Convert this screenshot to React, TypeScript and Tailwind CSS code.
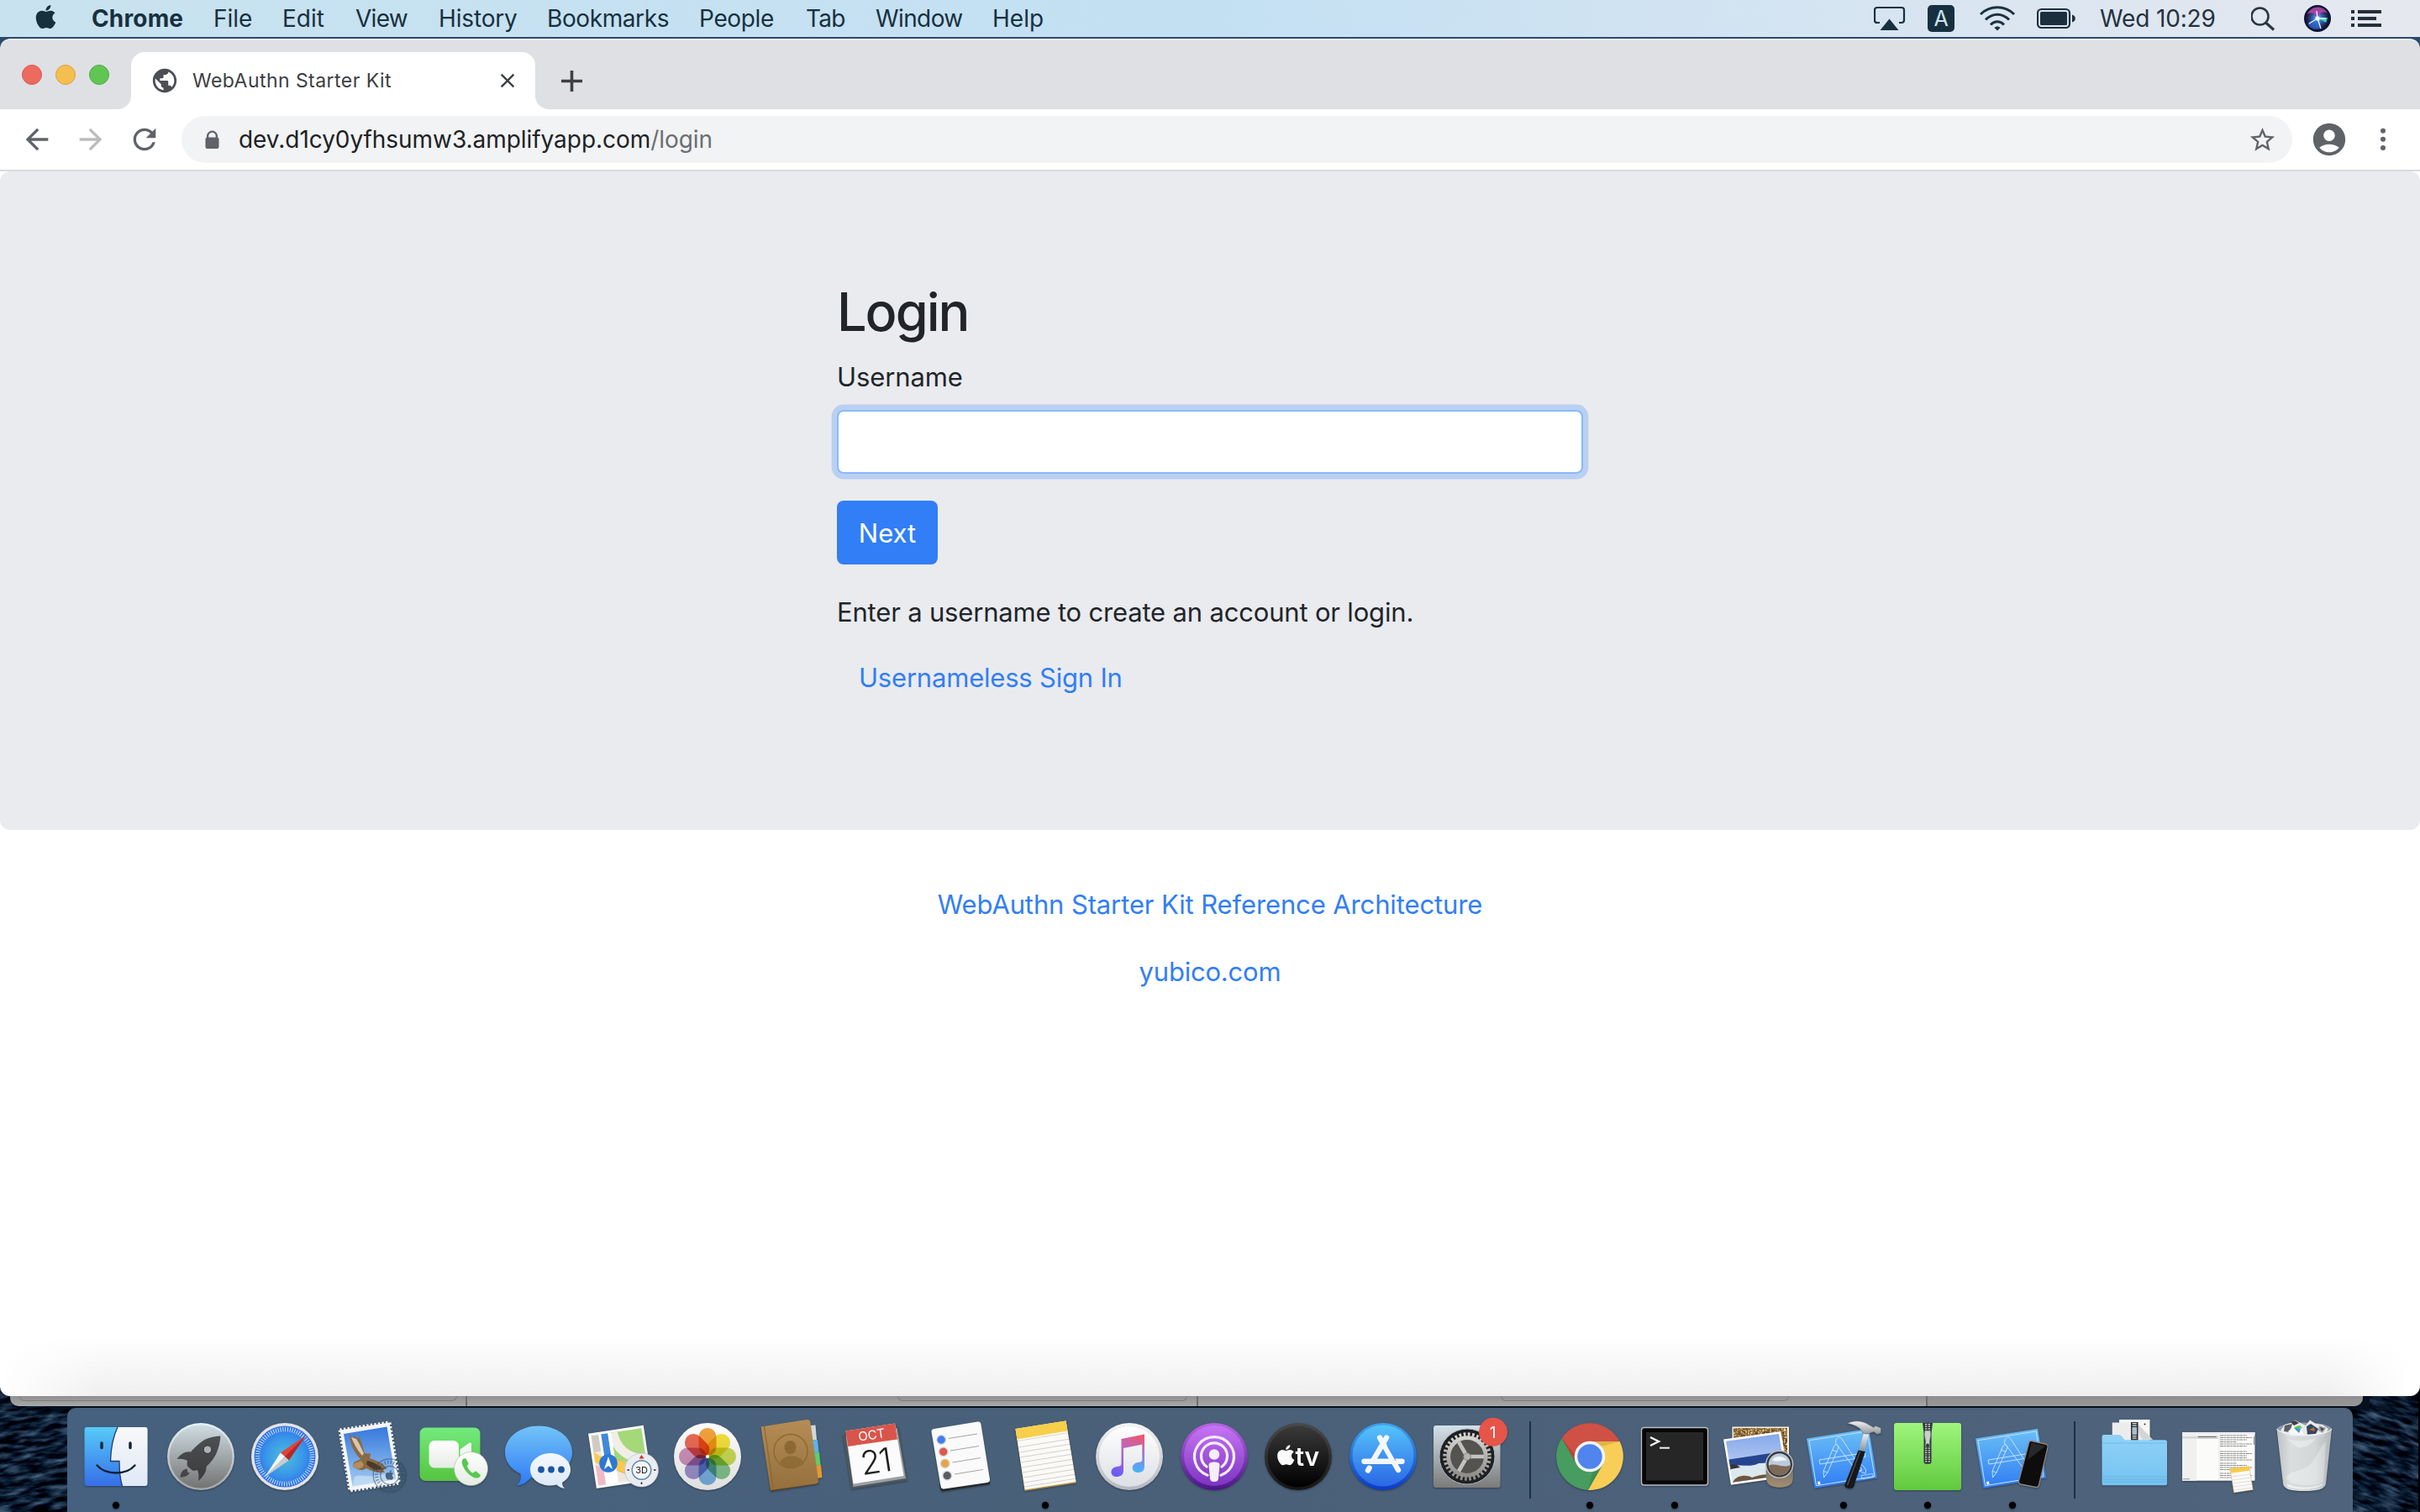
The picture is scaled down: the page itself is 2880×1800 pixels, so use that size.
import type { ReactNode } from "react";
import { FaApple } from "react-icons/fa";
import {
  MdAccountCircle,
  MdAdd,
  MdArrowBack,
  MdArrowForward,
  MdClose,
  MdLock,
  MdPublic,
  MdRefresh,
  MdStarBorder,
} from "react-icons/md";

const menus = [
  { label: "Chrome", cls: "w-[145px] font-bold tracking-[0.15px]" },
  { label: "File", cls: "w-[82px]" },
  { label: "Edit", cls: "w-[87px]" },
  { label: "View", cls: "w-[99px] tracking-[-0.7px]" },
  { label: "History", cls: "w-[129px] tracking-[-0.15px]" },
  { label: "Bookmarks", cls: "w-[181px] tracking-[-0.4px]" },
  { label: "People", cls: "w-[127px] tracking-[-0.35px]" },
  { label: "Tab", cls: "w-[83px] tracking-[-0.7px]" },
  { label: "Window", cls: "w-[139px] tracking-[-0.6px]" },
  { label: "Help", cls: "w-[80px]" },
];

function MenuBar() {
  return (
    <header className="flex h-11 shrink-0 items-center bg-linear-to-r from-[#c8e2ef] via-[#c3e0f3] via-50% to-[#e6e8ef] pl-[41px] text-[28px] leading-[44px] text-[#17303f]">
      <div className="w-[68px]">
        <FaApple className="h-8 w-[27px] -translate-y-[2px]" />
      </div>
      <nav className="flex flex-1">
        {menus.map((m) => (
          <span key={m.label} className={"whitespace-nowrap " + m.cls}>
            {m.label}
          </span>
        ))}
      </nav>
      <div className="flex h-11 w-[650px] items-center text-[#23323e]">
        <svg className="h-11 w-[64px]" viewBox="0 0 64 44">
          <path d="M7 27H4a3 3 0 0 1-3-3V12a3 3 0 0 1 3-3h29a3 3 0 0 1 3 3v12a3 3 0 0 1-3 3h-3" fill="none" stroke="#17303f" strokeWidth="2.2" />
          <path d="M18.500 22.500L29.500 36H7.500Z" fill="#17303f" />
        </svg>
        <div className="mr-[30px] flex h-8 w-8 items-center justify-center rounded-[5px] bg-[#17303f] text-[25px] text-[#cfe4f0]">A</div>
        <svg className="h-11 w-[68px]" viewBox="0 0 68 44" fill="none" stroke="#1c313f" strokeWidth="3">
          <path d="M1 17C12 6 30 6 41 17" />
          <path d="M7 23.500C15.500 15 26.500 15 35 23.500" />
          <path d="M13 29.500C18 24.500 24 24.500 29 29.500" />
          <path d="M17.500 33C19.500 31 22.500 31 24.500 33L21 36.500Z" fill="#1c313f" stroke="none" />
        </svg>
        <svg className="h-11 w-[75px]" viewBox="0 0 75 44">
          <rect x="1" y="11" width="38" height="22" rx="4.500" fill="none" stroke="#1c2f3c" strokeWidth="2.200" />
          <rect x="4" y="14" width="32" height="16" rx="1.500" fill="#1c2f3c" />
          <path d="M42 17.500C47 19 47 25 42 26.500Z" fill="#1c2f3c" />
        </svg>
        <span className="w-[180px] whitespace-nowrap tracking-[-0.15px]">Wed 10:29</span>
        <svg className="h-11 w-[63px]" viewBox="0 0 63 44" fill="none" stroke="#2a3642">
          <circle cx="10.500" cy="19.500" r="10" strokeWidth="2.600" />
          <path d="M17.500 27L27 35.500" strokeWidth="3.200" />
        </svg>
        <svg className="h-11 w-[56px]" viewBox="0 0 56 44">
          <defs>
            <radialGradient id="siri" cx="0.5" cy="0.5" r="0.5">
              <stop offset="0" stopColor="#9fe9ff" />
              <stop offset="0.35" stopColor="#3b6fc4" />
              <stop offset="0.8" stopColor="#262258" />
              <stop offset="1" stopColor="#0b1330" />
            </radialGradient>
          </defs>
          <circle cx="16" cy="22" r="16" fill="#0a1530" />
          <circle cx="16" cy="22" r="14.200" fill="url(#siri)" />
          <path d="M4 17C8 7 22 5 28 16C22 13 19 15 16 21C13 16 9 14 4 17Z" fill="#b848a8" opacity="0.85" />
          <path d="M4 28L16 21L20 34C12 36 7 34 4 28Z" fill="#2c6fd8" opacity="0.7" />
          <path d="M16 21L28 21L26 27Z" fill="#39d6b4" />
          <path d="M16 22L6 28M16 22L20 34M16 22L15 13M16 22L26 22" stroke="#e9f8ff" strokeWidth="1.300" />
          <circle cx="16" cy="22" r="2.500" fill="#ffffff" />
        </svg>
        <svg className="h-11 w-[40px]" viewBox="0 0 40 44" fill="#262f3b">
          <rect y="12" width="4" height="4" />
          <rect x="8" y="12" width="28" height="4" />
          <rect y="20" width="4" height="4" />
          <rect x="8" y="20" width="22" height="4" />
          <rect y="28" width="4" height="4" />
          <rect x="8" y="28" width="28" height="4" />
        </svg>
      </div>
    </header>
  );
}

function TabStrip() {
  return (
    <div className="flex h-[84px] items-end rounded-t-[10px] border-t-2 border-[#eeeeef] bg-[#dfe0e4]">
      <div className="flex h-full w-[140px] items-center gap-4 pl-[26px]">
        <span className="h-6 w-6 rounded-full border border-[#d9584c] bg-[#ed6a5e]" />
        <span className="h-6 w-6 rounded-full border border-[#dba03c] bg-[#f5bf4f]" />
        <span className="h-6 w-6 rounded-full border border-[#4dac40] bg-[#61c554]" />
      </div>
      <div className="h-4 w-4 bg-white">
        <div className="h-4 w-4 rounded-br-[16px] bg-[#dfe0e4]" />
      </div>
      <div className="flex h-[68px] w-[481px] items-center rounded-t-2xl bg-white">
        <MdPublic className="ml-[23px] h-[34px] w-[34px] text-[#4c4f54]" />
        <span className="ml-4 flex-1 whitespace-nowrap text-[23px] leading-[68px] tracking-[0.45px] text-[#3c4043]">
          WebAuthn Starter Kit
        </span>
        <MdClose className="mr-[19px] h-[28px] w-[28px] text-[#3c4043]" />
      </div>
      <div className="h-4 w-4 bg-white">
        <div className="h-4 w-4 rounded-bl-[16px] bg-[#dfe0e4]" />
      </div>
      <div className="flex h-[68px] items-center pl-[6px]">
        <MdAdd className="h-[43px] w-[43px] text-[#3c4043]" />
      </div>
    </div>
  );
}

function Toolbar() {
  return (
    <div className="flex h-[74px] items-center border-b-2 border-[#d9dade] bg-white">
      <div className="flex w-[216px] items-center">
        <MdArrowBack className="ml-6 h-10 w-10 text-[#5f6368]" />
        <MdArrowForward className="ml-6 h-10 w-10 text-[#babcbe]" />
        <MdRefresh className="ml-6 h-10 w-10 text-[#5f6368]" />
      </div>
      <div className="flex h-14 w-[2512px] items-center rounded-full bg-[#f1f3f4] pl-6">
        <svg className="h-[25px] w-[25px]" viewBox="0 0 25 25" fill="#5f6368">
          <path d="M6 11V8a6.500 6.500 0 0 1 13 0v3h-2.300V8a4.200 4.200 0 0 0-8.400 0v3Z" />
          <rect x="4.500" y="9.500" width="16" height="13.500" rx="2" />
        </svg>
        <span className="ml-[19px] flex-1 whitespace-nowrap text-[28px] leading-[56px] tracking-[-0.05px] text-[#202124]">
          dev.d1cy0yfhsumw3.amplifyapp.com<span className="text-[#6b6e72]">/login</span>
        </span>
        <MdStarBorder className="mr-[18px] h-[35px] w-[35px] text-[#5f6368]" />
      </div>
      <MdAccountCircle className="ml-[21px] h-[46px] w-[46px] text-[#5f6368]" />
      <svg className="ml-[33px] h-8 w-4" viewBox="0 0 16 32" fill="#5f6368">
        <circle cx="8" cy="5.700" r="3" />
        <circle cx="8" cy="15.700" r="3" />
        <circle cx="8" cy="26" r="3" />
      </svg>
    </div>
  );
}

function LoginPage() {
  return (
    <div className="relative flex h-[1458px] flex-col bg-white text-[31px] leading-[48px] text-[#212529]">
      <section className="h-[784px] rounded-[12px] bg-[#eaebef] pt-[129px]">
        <div className="mx-auto w-[888px]">
          <h2 className="h-[76px] text-[63px] leading-[76px] font-medium tracking-[-2px]">Login</h2>
          <label className="mt-4 block tracking-[-0.1px]">Username</label>
          <input className="mt-[15px] block h-[76px] w-full rounded-lg border-2 border-[#87bafb] bg-white px-6 shadow-[0_0_0_6.4px_#bad0f2] outline-none" />
          <button className="mt-8 block h-[76px] w-[120px] rounded-lg bg-[#327ef6] pt-px text-white">Next</button>
          <p className="mt-[33px] tracking-[-0.18px]">Enter a username to create an account or login.</p>
          <a className="mt-4 block px-[26px] leading-[76px] tracking-[-0.2px] text-[#327ef6]">Usernameless Sign In</a>
        </div>
      </section>
      <footer className="mt-[65px] flex flex-col items-center gap-8 tracking-[-0.12px] text-[#327ef6]">
        <a>WebAuthn Starter Kit Reference Architecture</a>
        <a className="tracking-[-0.2px]">yubico.com</a>
      </footer>
      <div className="absolute inset-x-0 bottom-0 h-18 bg-linear-to-b from-transparent to-[#efefef] [mask-image:linear-gradient(to_right,transparent,black_120px,black_2770px,transparent_2870px)]" />
    </div>
  );
}

function BackWindow() {
  return (
    <div className="ml-3 flex h-3 w-[2800px] overflow-hidden rounded-b-[10px] bg-linear-to-b from-[#8f8f8f] to-[#a9a9a9]">
      <div className="h-3 w-[544px] border-r-2 border-[#6f6f6f] pl-[11px]">
        <div className="h-[6px] w-[521px] rounded-b-[6px] border border-t-0 border-[#7e7e7e]" />
      </div>
      <div className="h-3 w-[870px] border-r-2 border-[#6f6f6f] pl-[512px]">
        <div className="h-[6px] w-[345px] rounded-b-[6px] border border-t-0 border-[#7e7e7e]" />
      </div>
      <div className="h-3 w-[868px] border-r-2 border-[#6f6f6f] pl-[360px]">
        <div className="h-[6px] w-[343px] rounded-b-[6px] border border-t-0 border-[#7e7e7e]" />
      </div>
      <div className="h-3 flex-1 bg-[#8e8e8e]/60" />
    </div>
  );
}

function DockIcon({ running, children }: { running?: boolean; children: ReactNode }) {
  return (
    <svg className="h-[124px] w-[100px] shrink-0 overflow-visible drop-shadow-[0_1px_1px_rgba(0,0,0,0.35)]" viewBox="0 0 100 124">
      {children}
      {running && <circle cx="50" cy="116" r="4.200" fill="#000000" />}
    </svg>
  );
}

function Gradient({ id, from, to }: { id: string; from: string; to: string }) {
  return (
    <linearGradient id={id} x1="0" y1="0" x2="0" y2="1">
      <stop offset="0" stopColor={from} />
      <stop offset="1" stopColor={to} />
    </linearGradient>
  );
}

function Finder() {
  return (
    <DockIcon running>
      <Gradient id="finder" from="#58cbf8" to="#356fe8" />
      <Gradient id="finderR" from="#f8f8f9" to="#dfe9f6" />
      <rect x="12.500" y="23" width="75" height="70" rx="3" fill="url(#finder)" />
      <path d="M52 23C46 35 44 48 43.500 63.500H54C54 75 55 85 57.500 93H84.500A3 3 0 0 0 87.500 90V26A3 3 0 0 0 84.500 23Z" fill="url(#finderR)" />
      <path d="M52 23C46 35 44 48 43.500 63.500H54C54 75 55 85 57.500 93" fill="none" stroke="#1d3a66" strokeWidth="1.300" />
      <path d="M33 42V47.500M67 42V47.500" stroke="#122035" strokeWidth="3.400" strokeLinecap="round" />
      <path d="M27.500 68.500C38 80.500 62 80.500 72.500 68.500" fill="none" stroke="#122035" strokeWidth="2.400" strokeLinecap="round" />
    </DockIcon>
  );
}

function Launchpad() {
  return (
    <DockIcon>
      <Gradient id="lp" from="#cfdde2" to="#737373" />
      <Gradient id="lpRing" from="#e6f2f6" to="#a5a6a6" />
      <Gradient id="rocket" from="#4d5154" to="#3a3a3b" />
      <circle cx="50" cy="58" r="40" fill="url(#lpRing)" />
      <circle cx="50" cy="58" r="37.500" fill="url(#lp)" />
      <path d="M73.500 33.500C64 34 56 36 50 41C45 45 41 49 38 52.500C32 51.500 26 55 21.500 61C27 60.500 31 61.500 34 63C33.500 65.500 33.500 67.500 34 69.500L40 74.500C42 75 44 74.500 46 74C47.500 78 48 82.500 47 87C53 82 57 76 56.500 70C62 65 66 60 69 53C71.500 47 73 40 73.500 33.500Z" fill="url(#rocket)" />
      <path d="M33.500 72.500C28 73 26 78 25.500 82.500C30.500 82.500 35.500 81 37 76.500L34.500 77.500Z" fill="#434546" />
      <circle cx="58" cy="49.700" r="4.800" fill="#a9b1b4" stroke="#2f3335" strokeWidth="1" />
    </DockIcon>
  );
}

function Safari() {
  return (
    <DockIcon>
      <radialGradient id="saf">
        <stop offset="0" stopColor="#4cc0d8" />
        <stop offset="0.6" stopColor="#3a97ea" />
        <stop offset="1" stopColor="#2f6fe6" />
      </radialGradient>
      <circle cx="50" cy="58" r="40" fill="#e3e3e4" />
      <circle cx="50" cy="58" r="36.500" fill="url(#saf)" />
      <circle cx="50" cy="58" r="32.500" fill="none" stroke="#d6ecfc" strokeWidth="5.500" strokeDasharray="0.9 1.936" />
      <path d="M75 33L44.800 53.500L54.800 62.500Z" fill="#e0433a" />
      <path d="M75 33L50 58L54.800 62.500Z" fill="#b52a26" />
      <path d="M26 82.500L44.800 53.500L50 58Z" fill="#f6f6f6" />
      <path d="M26 82.500L50 58L54.800 62.500Z" fill="#c9cbcd" />
    </DockIcon>
  );
}

function Mail() {
  return (
    <DockIcon>
      <Gradient id="sky" from="#3578dc" to="#a5cdf2" />
      <path d="M14.500 26.500L73.500 17.500L85 89.500L26.500 98.500Z" fill="#f4f5f7" stroke="#f4f5f7" strokeWidth="4" strokeDasharray="2.400 2.200" />
      <path d="M19 31L70.500 22.500L81 85L29.500 93.500Z" fill="url(#sky)" />
      <path d="M32 82C42 78 50 84 60 80L78 78L80.500 85L29.500 93.500Z" fill="#d5e6f5" opacity="0.6" />
      <path d="M26 31L31 37L31 31L35 37L37 34C41 42 42 49 44 54L51 54.500L50 60C58 62 65 66 71 72L66 74L68 77L60 77C54 76 50 74 46 72C42 75 37 75 30 70L31 65L39 61C34 56 29 48 27 40Z" fill="#8a6a45" />
      <path d="M28 35C31 42 35 50 41 57L43 54C40 48 37 41 34 37Z" fill="#d8c8ae" />
      <path d="M47 63C54 64 60 68 66 73L58 74C53 73 49 70 46 67Z" fill="#4c3a28" />
      <path d="M30 70L32 66L40 63L43 68C40 73 35 74 30 70Z" fill="#b58e5a" />
      <g fill="none" stroke="#2f4762" opacity="0.55">
        <circle cx="73.700" cy="80.300" r="19.500" strokeWidth="1.300" />
        <circle cx="73.700" cy="80.300" r="15.500" strokeWidth="4" strokeDasharray="1.300 2.200" />
        <circle cx="73.700" cy="80.300" r="11" strokeWidth="1.200" />
      </g>
      <FaApple x="67" y="73.500" size="13" color="#2f4762" opacity="0.8" />
    </DockIcon>
  );
}

function FaceTime() {
  return (
    <DockIcon>
      <Gradient id="ft" from="#72ea7d" to="#55c53f" />
      <Gradient id="ftw" from="#ffffff" to="#e6ebe3" />
      <rect x="9.500" y="23.500" width="72" height="63.500" rx="7" fill="url(#ft)" />
      <rect x="20.500" y="39" width="35.500" height="32.500" rx="6.500" fill="url(#ftw)" />
      <path d="M57.500 49.500L68 42C69.500 41 71 41.500 71 43.500V68L57.500 60Z" fill="#f2f6f1" />
      <circle cx="70.500" cy="72.500" r="20" fill="url(#ftw)" stroke="#a6b8a0" strokeWidth="0.600" />
      <path d="M60.500 61.500C59 64 59.500 68 63.500 74C68 80.500 74 84 78.500 83.500C80.500 83 82 81.500 82 80L76.500 75.500C75 75 74 77.500 72.500 77.500C70 76.500 67 72.500 66 69.500C66 68 68 67.500 67.500 66L64.500 60.500C63 60 61.500 60.500 60.500 61.500Z" fill="#58c950" />
    </DockIcon>
  );
}

function Messages() {
  return (
    <DockIcon>
      <Gradient id="msg" from="#72c4f8" to="#2f7af5" />
      <Gradient id="msgw" from="#f4f8fc" to="#dbe8f6" />
      <path d="M50 21.500C72 21.500 90 35 90 53C90 71 72 84 50 84C46.500 84 44 83.700 41 83C36 88.500 31 92 24 92.500C28.500 88 29.500 84 28.500 78.500C17 73 10 64 10 53C10 35 28 21.500 50 21.500Z" fill="url(#msg)" />
      <path d="M64 54C77 54 88 62.500 88 73.500C88 80 84 85.500 78 89C78 92 79 94 81 96C77 95.500 74 94 71.500 91.500C69 92.200 66.500 92.500 64 92.500C51 92.500 40 84.500 40 73.500C40 62.500 51 54 64 54Z" fill="url(#msgw)" />
      <g fill="#1c56a3">
        <circle cx="53" cy="73.500" r="3.900" />
        <circle cx="65" cy="73.500" r="3.900" />
        <circle cx="77" cy="73.500" r="3.900" />
      </g>
    </DockIcon>
  );
}

function Maps() {
  return (
    <DockIcon>
      <g transform="translate(9 30.700) rotate(-8.600)">
        <rect width="66.500" height="66" fill="#fbfbfa" />
        <svg x="3" y="3" width="60.500" height="60" viewBox="3 3 60.500 60">
          <rect width="66" height="66" fill="#ece8e1" />
          <rect x="3" y="3" width="9" height="20" fill="#cfcbc4" />
          <path d="M26 0H66V52L26 34Z" fill="#a5d878" />
          <path d="M29 0C29 22 42 38 66 40" fill="none" stroke="#f1eee8" strokeWidth="11" />
          <path d="M0 20L12 30V42L0 33Z" fill="#f8cb50" />
          <path d="M24 32L66 58V72L24 46Z" fill="#f8cb50" stroke="#e5a93c" strokeWidth="0.800" />
          <path d="M0 36L12 44V66H0Z" fill="#f1b9c6" />
          <rect x="12" y="0" width="15" height="66" fill="#ffffff" />
          <rect x="15" y="0" width="8" height="36" fill="#4189d8" />
        </svg>
      </g>
      <circle cx="33" cy="66" r="10.800" fill="#2c78d6" />
      <path d="M33 58L38 73L33 69L28 73Z" fill="#ffffff" />
      <circle cx="72.500" cy="74" r="20" fill="#e9edf2" stroke="#b9c2cc" strokeWidth="0.700" />
      <circle cx="72.500" cy="74" r="11.300" fill="#f3f5f8" stroke="#5b89a8" strokeWidth="1.400" />
      <path d="M72.500 56L75.500 60.500H69.500Z" fill="#d92f26" />
      <path d="M55.500 74H58M87 74H89.500M72.500 88.500V91" stroke="#222222" strokeWidth="1.600" />
      <text x="72.500" y="78" fontSize="11" textAnchor="middle" fill="#222222">3D</text>
    </DockIcon>
  );
}

const petals = [
  { turn: "rotate(0)", color: "#f4a43b" },
  { turn: "rotate(45)", color: "#f5e13c" },
  { turn: "rotate(90)", color: "#cbdc55" },
  { turn: "rotate(135)", color: "#86c68f" },
  { turn: "rotate(180)", color: "#7cb4e6" },
  { turn: "rotate(225)", color: "#9f93cd" },
  { turn: "rotate(270)", color: "#cf92bb" },
  { turn: "rotate(315)", color: "#ec6a57" },
];

function Photos() {
  return (
    <DockIcon>
      <Gradient id="ph" from="#fdfdfd" to="#dedede" />
      <circle cx="50" cy="58" r="40" fill="url(#ph)" />
      <g transform="translate(50 58)">
        {petals.map((p) => (
          <rect key={p.color} className="mix-blend-multiply" x="-10.500" y="-34" width="21" height="33" rx="10.500" fill={p.color} transform={p.turn} />
        ))}
        <circle r="2" fill="#ffffff" />
      </g>
    </DockIcon>
  );
}

function Contacts() {
  return (
    <DockIcon>
      <Gradient id="ct" from="#b58c55" to="#94703c" />
      <path d="M72 21L78.500 20.500L80 38L74 39Z" fill="#d3d6d9" />
      <path d="M74 38.500L81 38L82.500 53L76 54Z" fill="#5cb5e8" />
      <path d="M76 53.500L83 53L84.500 68L78 69Z" fill="#5fcf68" />
      <path d="M78 68.500L85 68L86.500 83L80 84Z" fill="#e59a30" />
      <path d="M25 99.500L82 90.500L81 87L24 95Z" fill="#5b421f" />
      <path d="M13.500 22.500L68 14C70.500 13.700 72 15 72.500 17L82 87C82.200 89 81 90 79 90.500L25 98Z" fill="url(#ct)" />
      <path d="M17.500 22L28.500 97.500" stroke="#8b6734" strokeWidth="1.200" />
      <circle cx="49" cy="51.500" r="20" fill="none" stroke="#8c6833" strokeWidth="1.400" />
      <ellipse cx="48.500" cy="47" rx="7" ry="8" fill="#8c6833" />
      <path d="M36 65C39 59 45 57.500 50 57.500C56 57.500 61 60 63.500 64C56 73 43 73.500 36 65Z" fill="#8c6833" opacity="0.850" />
    </DockIcon>
  );
}

function Calendar() {
  return (
    <DockIcon>
      <path d="M10 32.500L76 22.500L87 86.500L20 97Z" fill="#4e565d" />
      <path d="M14 36L74.500 24L85 84L22.500 94Z" fill="#9aa0a4" />
      <path d="M13.500 27.500L72 18.500L82.500 81L22.500 90.500Z" fill="#fbfbfb" />
      <path d="M13.500 27.500L72 18.500L75 37.500L16.200 46Z" fill="#d9554b" />
      <text x="44.300" y="37.500" fontSize="15" textAnchor="middle" fill="#ffffff" transform="rotate(-8.700 44.300 32.300)">OCT</text>
      <text x="48.500" y="77.500" fontSize="39" fontWeight="300" letterSpacing="-2" textAnchor="middle" fill="#1f1f1f" transform="rotate(-8.700 49.600 63)">21</text>
    </DockIcon>
  );
}

function Reminders() {
  return (
    <DockIcon>
      <path d="M28 98.500L84 90L83 84L26 92Z" fill="#24282c" stroke="#24282c" strokeWidth="2" strokeLinejoin="round" />
      <path d="M19 28.500L71 20L81.500 85.500L30 93Z" fill="#fafafa" stroke="#fafafa" strokeWidth="7" strokeLinejoin="round" />
      <path d="M35.500 36.500L70 31M38 51L72 45.500M40.500 65L74 59.500M43 79L76.500 73.500" stroke="#9b9b9b" strokeWidth="0.900" />
      <g stroke="#d5d5d5" strokeWidth="1.300">
        <circle cx="27.200" cy="38" r="5.300" fill="#3f7df0" />
        <circle cx="29.700" cy="52.300" r="5.300" fill="#e0574b" />
        <circle cx="31.700" cy="66.300" r="5.300" fill="#eaa344" />
        <circle cx="34.200" cy="80.700" r="5.300" fill="#555c66" />
      </g>
    </DockIcon>
  );
}

function Notes() {
  return (
    <DockIcon running>
      <path d="M14.500 25L74.500 15.500L86.800 89.500L25.600 99Z" fill="#b98f35" />
      <path d="M14.500 25L74.500 15.500L86.500 88L25.600 97.500Z" fill="#fbfaf7" />
      <path d="M14.500 25L74.500 15.500L76.500 27.500L16.500 37.500Z" fill="#f8cf4a" />
      <path d="M17 39.500L76.500 29.800" stroke="#a9a9a9" strokeWidth="0.900" strokeDasharray="1.200 1.200" />
      <path d="M18 47L78 37.300M19 53L79 43.300M20 59L80 49.300M21 65L81 55.300M22 71L82 61.300M23 77L83 67.300M24 83L84 73.300M25 89L85 79.300M25.500 94L86 84.300" stroke="#c5c5c5" strokeWidth="0.800" />
    </DockIcon>
  );
}

function Music() {
  return (
    <DockIcon>
      <Gradient id="mu" from="#ffffff" to="#dcdfe5" />
      <Gradient id="muRing" from="#f4f4f5" to="#b4b7bc" />
      <linearGradient id="note" gradientUnits="userSpaceOnUse" x1="66" y1="32" x2="40" y2="82">
        <stop offset="0" stopColor="#f0566a" />
        <stop offset="0.450" stopColor="#b768c8" />
        <stop offset="1" stopColor="#6b5cf5" />
      </linearGradient>
      <linearGradient id="noteR" gradientUnits="userSpaceOnUse" x1="66" y1="34" x2="62" y2="76">
        <stop offset="0" stopColor="#f25765" />
        <stop offset="0.500" stopColor="#9a7ad8" />
        <stop offset="1" stopColor="#45b4f7" />
      </linearGradient>
      <circle cx="50" cy="58" r="40" fill="url(#muRing)" />
      <circle cx="50" cy="58" r="36" fill="url(#mu)" />
      <path d="M40.500 37L68 31.500V43L43 48V75C43 80 39 82 35 82C31 82 28.500 80 28.500 76.500C28.500 73 31 70.500 35.500 70C39 69.500 40.500 69 40.500 66Z" fill="url(#note)" />
      <path d="M65.300 40L68 31.500V70C68 75 64.500 77 60.500 77C56.500 77 53.800 75 53.800 71.500C53.800 68 56.500 65.500 60.500 65C64 64.500 65.300 64 65.300 61.500Z" fill="url(#noteR)" />
    </DockIcon>
  );
}

function Podcasts() {
  return (
    <DockIcon>
      <Gradient id="pod" from="#c774f5" to="#7c34c0" />
      <Gradient id="podRing" from="#b766e2" to="#4a1688" />
      <circle cx="50" cy="58" r="40" fill="url(#podRing)" />
      <circle cx="50" cy="57" r="36" fill="url(#pod)" />
      <g fill="none" stroke="#f6effa" strokeWidth="3.200" strokeLinecap="round">
        <path d="M42 80.200A23.500 23.500 0 1 1 58 80.200" />
        <path d="M41 70A15.500 15.500 0 1 1 59 70" />
      </g>
      <circle cx="50" cy="55.500" r="6.200" fill="#f6effa" />
      <path d="M43.500 68C43.500 65.500 46 64.500 50 64.500C54 64.500 56.500 65.500 56.500 68L55 84C54.700 87 53 88 50 88C47 88 45.300 87 45 84Z" fill="#f6effa" />
    </DockIcon>
  );
}

function AppleTv() {
  return (
    <DockIcon>
      <Gradient id="tv" from="#3a3a3a" to="#000000" />
      <Gradient id="tvRing" from="#4a4a4a" to="#151515" />
      <circle cx="50" cy="58" r="40" fill="url(#tvRing)" />
      <circle cx="50" cy="58" r="36.500" fill="url(#tv)" />
      <FaApple x="21.500" y="42.500" size="27.500" color="#fafafa" />
      <text x="46.500" y="68.500" fontSize="30" fontWeight="600" letterSpacing="-0.200" fill="#fafafa">tv</text>
    </DockIcon>
  );
}

function AppStore() {
  return (
    <DockIcon>
      <Gradient id="as" from="#56c3fa" to="#2a67e6" />
      <Gradient id="asRing" from="#3fa4ee" to="#0b3bc4" />
      <circle cx="50" cy="58" r="40" fill="url(#asRing)" />
      <circle cx="50" cy="57" r="36.500" fill="url(#as)" />
      <g fill="none" stroke="#f3f7fc" strokeWidth="6.400" strokeLinecap="round">
        <path d="M54 35.500L37.500 63.500M33.600 71.500L32 74.500" />
        <path d="M27.500 63.700H72.500" />
        <path d="M46 35.500L68 74" />
      </g>
      <path d="M55 45L65 63" stroke="#2f7fe8" strokeWidth="0.800" />
    </DockIcon>
  );
}

function SystemPreferences() {
  return (
    <DockIcon>
      <Gradient id="sp" from="#d3e1ea" to="#7b7b79" />
      <Gradient id="gear" from="#d4d4d2" to="#8f8e8a" />
      <rect x="10" y="21" width="79.500" height="74" rx="3" fill="url(#sp)" />
      <circle cx="50" cy="58" r="33" fill="#1f2021" />
      <circle cx="50" cy="58" r="33" fill="none" stroke="#a7bdd0" strokeWidth="0.900" />
      <circle cx="50" cy="58" r="26.500" fill="none" stroke="url(#gear)" strokeWidth="4.500" strokeDasharray="2.700 2.504" />
      <circle cx="50" cy="58" r="22.300" fill="#55534f" stroke="url(#gear)" strokeWidth="4.800" />
      <g stroke="#c3c2bf" strokeWidth="4.600">
        <path d="M50 58H70M50 58L40 40.700M50 58L40 75.300" />
      </g>
      <circle cx="50" cy="58" r="4.300" fill="#b5b4b1" stroke="#7b7a77" strokeWidth="0.800" />
      <circle cx="81" cy="28.700" r="17" fill="#e6544a" />
      <text x="80.500" y="35.500" fontSize="19" textAnchor="middle" fill="#ffffff">1</text>
    </DockIcon>
  );
}

function Chrome() {
  return (
    <DockIcon running>
      <path d="M16.600 36.100A40 40 0 0 1 85.600 40L50 40L34.400 67Z" fill="#cf5145" />
      <path d="M85.600 40A40 40 0 0 1 47.700 97.900L65.600 67L50 40Z" fill="#f8ce56" />
      <path d="M47.700 97.900A40 40 0 0 1 16.600 36.100L34.400 67L65.600 67Z" fill="#479c60" />
      <path d="M50 40H85.600L64 46Z" fill="#c99a35" opacity="0.500" />
      <path d="M16.600 36.100L34.400 67L33 56Z" fill="#9c3128" opacity="0.400" />
      <path d="M65.600 67L47.700 97.900L54 74Z" fill="#2c7a42" opacity="0.400" />
      <circle cx="50" cy="58" r="18.300" fill="#f4f4f4" />
      <circle cx="50" cy="58" r="14.700" fill="#4f85ec" />
    </DockIcon>
  );
}

function Terminal() {
  return (
    <DockIcon running>
      <rect x="10.500" y="23.500" width="79" height="68.500" rx="3" fill="#060606" stroke="#b9bdc0" strokeWidth="1.400" />
      <rect x="16" y="29" width="68" height="57.500" fill="#262626" />
      <path d="M21 35L31 40L21 45" fill="none" stroke="#f3f3f3" strokeWidth="2.400" />
      <path d="M32 47.700H44" stroke="#f3f3f3" strokeWidth="2" />
    </DockIcon>
  );
}

function Preview() {
  return (
    <DockIcon>
      <Gradient id="pvSky" from="#86a8ea" to="#cddcf5" />
      <Gradient id="barrel" from="#6f6a64" to="#a58f74" />
      <filter id="sand" x="0" y="0" width="1" height="1" colorInterpolationFilters="sRGB">
        <feTurbulence baseFrequency="0.35" numOctaves="2" seed="4" />
        <feColorMatrix values="1.2 0 0 0 0.3  1.1 0 0 0 0.2  0.8 0 0 0 0.08  0 0 0 0 1" />
      </filter>
      <rect x="18.500" y="22.500" width="67.500" height="60" fill="#f4f1ea" />
      <rect x="20.500" y="24.500" width="63.500" height="56" filter="url(#sand)" />
      <path d="M8 37.500L76.300 28L85.500 82L17 91.700Z" fill="#fdfdfd" />
      <path d="M11 39.700L74 31L82 80L19 88.700Z" fill="url(#pvSky)" />
      <path d="M14.500 61.500L77.500 52L80 69L16.500 74Z" fill="#27458f" />
      <path d="M16 70C30 66 38 72 50 66C60 66 70 62 79.500 64L82 80L19 88.700Z" fill="#dbe9ee" />
      <path d="M16.500 73L28 71L24 68L16 67.500Z" fill="#3b3029" />
      <path d="M20 87C24 80 36 79 42 83C50 80 60 78 66 80L81 80L19 88.700Z" fill="#6e5640" />
      <path d="M58.700 67.500C58.700 80 58 88 62 91C68 96 82 96 88 91C92 88 90.700 80 90.700 67.500Z" fill="url(#barrel)" />
      <circle cx="74.700" cy="67.300" r="16" fill="#35383b" stroke="#b9bcbe" strokeWidth="1.500" />
      <circle cx="74.700" cy="67.300" r="13" fill="#bccbdc" />
      <path d="M62 69C68 64 80 73 87.500 68C87 76 81 80 74.700 80.300C68 80 63 76 62 69Z" fill="#7d6a55" />
      <path d="M66 62C70 56 80 57 84 63C78 61 72 66 66 62Z" fill="#f3f7fa" />
    </DockIcon>
  );
}

function Blueprint({ id }: { id: string }) {
  return (
    <>
      <Gradient id={id} from="#6cc0f6" to="#2f7cf3" />
      <path d="M6 36.500L80 25L90 83.500L15.500 95.700Z" fill={"url(#" + id + ")"} />
      <g fill="none" stroke="#c3e2fb" strokeWidth="1">
        <path d="M9 38.700L78 28L87 81.500L17.500 92.700Z" />
        <path d="M21 62L75 53.500L76 58.500L22 67Z" />
        <path d="M41 38C43 34 46 34 48 37L72 74L66 76L40.500 42Z" />
        <path d="M38.500 46C40 42.500 44 43.500 44 47L31 77L26.500 83L26 75.500Z" />
        <path d="M36.500 50L42.500 52.500M26 75.500L31 77" />
        <path d="M68 66C75 69 78 74 76 78C71 77 68 74 67 71" />
      </g>
      <path d="M19 88L22 87.500L22.500 91L19.500 91.500Z" fill="#ffffff" />
    </>
  );
}

function Xcode() {
  return (
    <DockIcon running>
      <Blueprint id="bpX" />
      <path d="M71 80.500L84.500 78.500L85.300 82.500L71.700 84.700Z" fill="none" stroke="#c3e2fb" strokeWidth="0.800" />
      <Gradient id="steel" from="#f2f3f4" to="#8e959b" />
      <path d="M68.500 50L74 30H80L75.500 51Z" fill="url(#steel)" />
      <path d="M54.500 18.500C62 14.500 72 15 80 20L86 23.500L88 21.500L94.500 24V30L90 31.500L86 28.500L80.500 30.500C79 31.500 74 31 73 30C71 24 64 20.500 54.500 18.500Z" fill="url(#steel)" stroke="#5d646a" strokeWidth="0.600" />
      <path d="M67.500 50.500L75.800 52L62 94C60 97.500 52 96 51 92.500Z" fill="#17181a" />
      <path d="M69.500 52L54.500 92" stroke="#55595e" strokeWidth="1.200" />
    </DockIcon>
  );
}

function ArchiveUtility() {
  return (
    <DockIcon running>
      <Gradient id="ar" from="#9ff57c" to="#60ca3e" />
      <rect x="10" y="18" width="80" height="80" rx="3" fill="url(#ar)" />
      <path d="M44 18H56L54.500 30V64C54.500 66 53.500 66.700 52 66.700H48C46.500 66.700 45.500 66 45.500 64V30Z" fill="#33373a" />
      <path d="M50 19V65" stroke="#d9dcde" strokeWidth="6" strokeDasharray="1.200 1.400" />
      <path d="M50 18V65" stroke="#33373a" strokeWidth="1.400" />
      <path d="M46.500 27H53.500L54 32L52.500 40L53 46H47L47.500 40L46 32Z" fill="#c9ced2" stroke="#4b5054" strokeWidth="0.700" />
      <circle cx="50" cy="44.500" r="2" fill="#33373a" />
    </DockIcon>
  );
}

function Simulator() {
  return (
    <DockIcon running>
      <Blueprint id="bpS" />
      <path d="M73 39.500L89 43C91.500 43.500 92.500 45 92 47L81.500 92C81 94 79.500 95 77.500 94.500L60 91C57.800 90.500 57 89 57.500 87L69.500 42C70 40 71 39 73 39.500Z" fill="#0d0d0e" stroke="#8d8783" strokeWidth="1.300" />
      <path d="M72.500 41.500L89.500 45.500L68 62Z" fill="#26282a" />
    </DockIcon>
  );
}

function Downloads() {
  return (
    <DockIcon>
      <Gradient id="fo" from="#8fd2f7" to="#74c3f1" />
      <rect x="30" y="14" width="36.500" height="30" fill="#f6f6f6" />
      <path d="M21.700 17.500H44L70 38H21.700Z" fill="#ececec" />
      <path d="M51 18L70 38H58C54 33 52 26 51 18Z" fill="#d4d5d7" />
      <rect x="44" y="17" width="8.500" height="22" fill="#2c2f32" />
      <path d="M48.200 18V38" stroke="#e6e8ea" strokeWidth="5" strokeDasharray="1.200 1.300" />
      <rect x="45.500" y="23" width="5.500" height="9" rx="1.500" fill="#a9bcc8" />
      <circle cx="60.500" cy="19.500" r="0.900" fill="#222222" />
      <path d="M9.500 34.500C9.500 33 10.500 32 12 32H29C31 32 32.500 33 34 35L36 37.500C36.500 38 37 38.300 38 38.300H84.500C86 38.300 87 39.300 87 41V90C87 91.500 86 92.300 84.500 92.300H12C10.500 92.300 9.500 91.500 9.500 90Z" fill="url(#fo)" />
      <path d="M9.500 42H87" stroke="#6cbbe9" strokeWidth="0.900" />
      <path d="M9.500 82H87M9.500 85H87M9.500 88H87" stroke="#66b1dc" strokeWidth="0.800" />
    </DockIcon>
  );
}

const textRows = [31, 33.500, 36, 38.500, 41, 43.500, 50, 52.500, 55, 57.500, 60, 64, 66.500, 69, 71.500, 76, 78.500, 81];

function MinimizedNotes() {
  return (
    <DockIcon>
      <rect x="5" y="29" width="86.500" height="57.700" fill="#fbfbf9" />
      <rect x="5" y="29" width="86.500" height="3" fill="#eeeeee" />
      <rect x="5" y="32" width="17" height="54.700" fill="#f0f0f0" />
      <rect x="5" y="34" width="17" height="2.500" fill="#d5d5d5" />
      <rect x="22.500" y="33" width="25" height="4" fill="#cfcfcf" />
      <path d="M24 34.500H45" stroke="#777777" strokeWidth="1" />
      <path d="M49 32V86.700" stroke="#dcdcdc" strokeWidth="0.700" />
      {textRows.map((y, i) => (
        <path key={y} d={i % 3 === 1 ? "M50 0H88" : i % 4 === 3 ? "M50 0H70" : "M50 0H82"} transform={"translate(0 " + (y + 2) + ")"} stroke="#8c8c8c" strokeWidth="1.100" strokeDasharray="4 0.600 2.500 0.600" />
      ))}
      <path d="M90.500 34V44" stroke="#8a8a8a" strokeWidth="1" />
      <path d="M6 84.700H14" stroke="#8a8a8a" strokeWidth="0.900" />
      <path d="M62 72.500L84.700 69.700L89.300 97.500L66.500 101Z" fill="#fbfaf6" stroke="#c9a75a" strokeWidth="0.500" />
      <path d="M62 72.500L84.700 69.700L85.500 74.500L62.800 77.700Z" fill="#f7cc48" />
      <path d="M64 82L86.500 79M64.700 86L87 83M65.300 90L87.700 87M66 94L88.300 91M66.500 98L89 95" stroke="#cccccc" strokeWidth="0.600" />
    </DockIcon>
  );
}

function Trash() {
  return (
    <DockIcon>
      <linearGradient id="bin" x1="0" x2="1" y1="0" y2="0">
        <stop offset="0" stopColor="#c3c7ca" />
        <stop offset="0.250" stopColor="#e2e4e5" />
        <stop offset="0.700" stopColor="#dadcdd" />
        <stop offset="1" stopColor="#b4b9bd" />
      </linearGradient>
      <ellipse cx="50.300" cy="25" rx="32.500" ry="7.500" fill="#8e9aa6" />
      <path d="M22 27L27 20L34 18L39 14.500L46 18L52 21L57 14.500L64 19L72 20L79 25L74 34H28Z" fill="#e8e9ea" />
      <path d="M27 21L36 19L33 29L26 28Z" fill="#5a5d60" />
      <path d="M31 28L38 21L46 24L50 33L36 34Z" fill="#f7f7f7" />
      <path d="M34 17L39 15L44 18L38 21Z" fill="#3d4043" />
      <path d="M38 23L45 21L48 24L41 25.500Z" fill="#5cc84e" />
      <path d="M38 24L46 25L44 30Z" fill="#3f8fe0" />
      <path d="M53 22L58 19L67 25L64 31L54 32Z" fill="#34475f" />
      <path d="M56 26L62 23L63 28Z" fill="#c66a36" />
      <path d="M68 21L76 24L72 30L67 27Z" fill="#9da1a5" />
      <path d="M69 23L74 25L71 28Z" fill="#45494d" />
      <path d="M17.500 25C24 35 76 35 83 25L76 90C75 97 66 99 50.300 99C34 99 26 97 25 90Z" fill="url(#bin)" opacity="0.960" />
      <path d="M28 84C34 72 50 78 60 64C68 54 70 44 76 40L73 88C64 94 36 94 28 84Z" fill="#ffffff" opacity="0.300" />
      <path d="M28 36C40 42 60 38 64 36C58 46 48 47 44 48Z" fill="#ffffff" opacity="0.350" />
      <path d="M30 92C40 97 62 97 72 91" stroke="#ffffff" strokeWidth="2" fill="none" opacity="0.600" />
      <path d="M17.500 25C24 35 76 35 83 25" stroke="#f4f5f6" strokeWidth="1.100" fill="none" />
    </DockIcon>
  );
}

function Dock() {
  return (
    <div className="ml-20 flex h-[124px] w-[2720px] rounded-t-[10px] bg-linear-to-r from-[#45617f] via-[#4a6078] to-[#4f637c] pl-2">
      <div className="flex gap-[0.5px]">
        <Finder />
        <Launchpad />
        <Safari />
        <Mail />
        <FaceTime />
        <Messages />
        <Maps />
        <Photos />
        <Contacts />
        <Calendar />
        <Reminders />
        <Notes />
        <Music />
        <Podcasts />
        <AppleTv />
        <AppStore />
        <SystemPreferences />
      </div>
      <div className="mt-4 mr-[20px] ml-[24px] h-[92px] w-[2px] bg-[#1b3049]" />
      <div className="flex gap-[0.5px]">
        <Chrome />
        <Terminal />
        <Preview />
        <Xcode />
        <ArchiveUtility />
        <Simulator />
      </div>
      <div className="mt-4 mr-[22px] ml-[23px] h-[92px] w-[2px] bg-[#1b3049]" />
      <div className="flex">
        <Downloads />
        <MinimizedNotes />
        <Trash />
      </div>
    </div>
  );
}

function Wallpaper() {
  return (
    <svg className="absolute inset-x-0 bottom-0 h-[170px] w-full" viewBox="0 0 2880 170">
      <filter id="waves" x="0" y="0" width="1" height="1" colorInterpolationFilters="sRGB">
        <feTurbulence type="fractalNoise" baseFrequency="0.04 0.17" numOctaves="4" seed="7" />
        <feColorMatrix values="0.7 0 0 0 -0.31  0.8 0 0 0 -0.29  0.9 0 0 0 -0.26  0 0 0 0 1" />
      </filter>
      <rect width="2880" height="170" fill="#071a2e" />
      <g transform="rotate(-10 40 90)">
        <rect x="-60" y="-40" width="220" height="260" filter="url(#waves)" />
      </g>
      <g transform="rotate(18 2840 90)">
        <rect x="2740" y="-40" width="240" height="260" filter="url(#waves)" />
      </g>
      <rect width="2880" height="50" fill="#000814" opacity="0.300" />
      <rect x="60" y="12" width="2760" height="36" fill="#04101d" />
      <rect x="2878" width="2" height="170" fill="#000000" />
    </svg>
  );
}

export default function App() {
  return (
    <div className="relative flex h-[1800px] w-[2880px] flex-col overflow-hidden bg-[#2b4a6d] font-['Inter',sans-serif]">
      <Wallpaper />
      <MenuBar />
      <div className="relative mt-[2px] h-[1616px] overflow-hidden rounded-[12px]">
        <TabStrip />
        <Toolbar />
        <LoginPage />
      </div>
      <div className="relative">
        <BackWindow />
        <div className="mt-[2px]">
          <Dock />
        </div>
      </div>
    </div>
  );
}
